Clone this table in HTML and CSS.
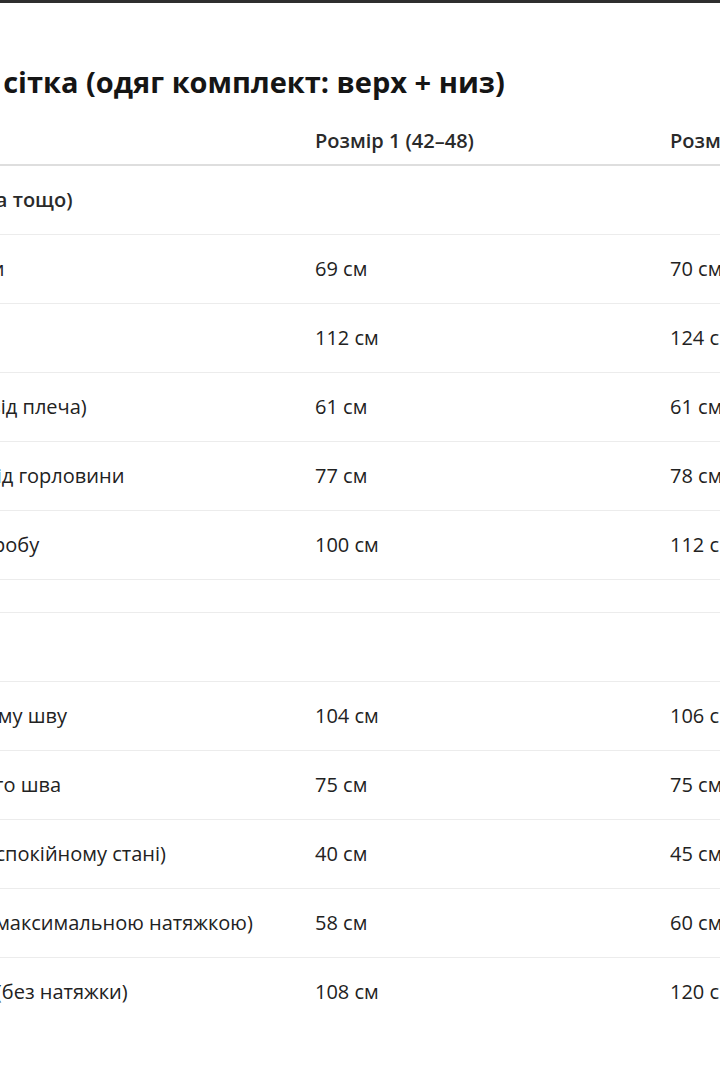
FILE: index.html
```html
<!DOCTYPE html>
<html lang="uk">
<head>
<meta charset="utf-8">
<title>Розмірна сітка</title>
<link rel="stylesheet" href="styles.css">
</head>
<body>
<div class="topbar"></div>
<section class="sheet">
  <h2 class="title">Розмірна сітка (одяг комплект: верх + низ)</h2>
  <table class="sizes">
    <colgroup>
      <col class="c-label">
      <col class="c-size">
      <col class="c-size">
    </colgroup>
    <thead>
      <tr><th>Параметр</th><th>Розмір 1 (42–48)</th><th>Розмір 2 (50–56)</th></tr>
    </thead>
    <tbody>
      <tr class="group"><td>Верх (футболка тощо)</td><td></td><td></td></tr>
      <tr><td>Довжина кофти</td><td>69 см</td><td>70 см</td></tr>
      <tr><td>Обхват грудей</td><td>112 см</td><td>124 см</td></tr>
      <tr><td>Довжина рук (від плеча)</td><td>61 см</td><td>61 см</td></tr>
      <tr><td>Заг. довжина від горловини</td><td>77 см</td><td>78 см</td></tr>
      <tr><td>Ширина по виробу</td><td>100 см</td><td>112 см</td></tr>
      <tr class="spacer"><td></td><td></td><td></td></tr>
      <tr class="group"><td>Низ (штани)</td><td></td><td></td></tr>
      <tr><td>Довж. по бічному шву</td><td>104 см</td><td>106 см</td></tr>
      <tr><td>Довж. крокового шва</td><td>75 см</td><td>75 см</td></tr>
      <tr><td>Обхват талії (у спокійному стані)</td><td>40 см</td><td>45 см</td></tr>
      <tr><td>Обхват талії (з максимальною натяжкою)</td><td>58 см</td><td>60 см</td></tr>
      <tr><td>Обхват стегон (без натяжки)</td><td>108 см</td><td>120 см</td></tr>
    </tbody>
  </table>
</section>
</body>
</html>
```

FILE: styles.css
```css
html, body {
  margin: 0;
  padding: 0;
  background: #ffffff;
}
body {
  font-family: "Open Sans", "Noto Sans", "Liberation Sans", sans-serif;
  color: #222222;
  overflow: hidden;
}
.topbar {
  height: 3px;
  background: #2e2e2e;
}
.sheet {
  margin-left: -160px;
}
.title {
  margin: 60px 0 14px 15px;
  font-size: 29px;
  line-height: 38px;
  font-weight: 700;
  color: #151515;
  white-space: nowrap;
}
.sizes {
  border-collapse: collapse;
  table-layout: fixed;
  width: 1173px;
  font-size: 20px;
}
.c-label { width: 463px; }
.c-size { width: 355px; }
.sizes th {
  text-align: left;
  font-weight: 600;
  color: #2a2a2a;
  padding: 12px 12px 9px;
  line-height: 28px;
  border-bottom: 2px solid #dedede;
  white-space: nowrap;
}
.sizes td {
  padding: 20px 12px;
  line-height: 28px;
  border-bottom: 1px solid #ececec;
  white-space: nowrap;
}
.sizes tr:last-child td {
  border-bottom: none;
}
.sizes tr.group td {
  font-weight: 600;
  color: #2a2a2a;
}
.sizes tr.spacer td {
  padding: 16px 12px;
  line-height: 0;
  height: 0;
}
```
